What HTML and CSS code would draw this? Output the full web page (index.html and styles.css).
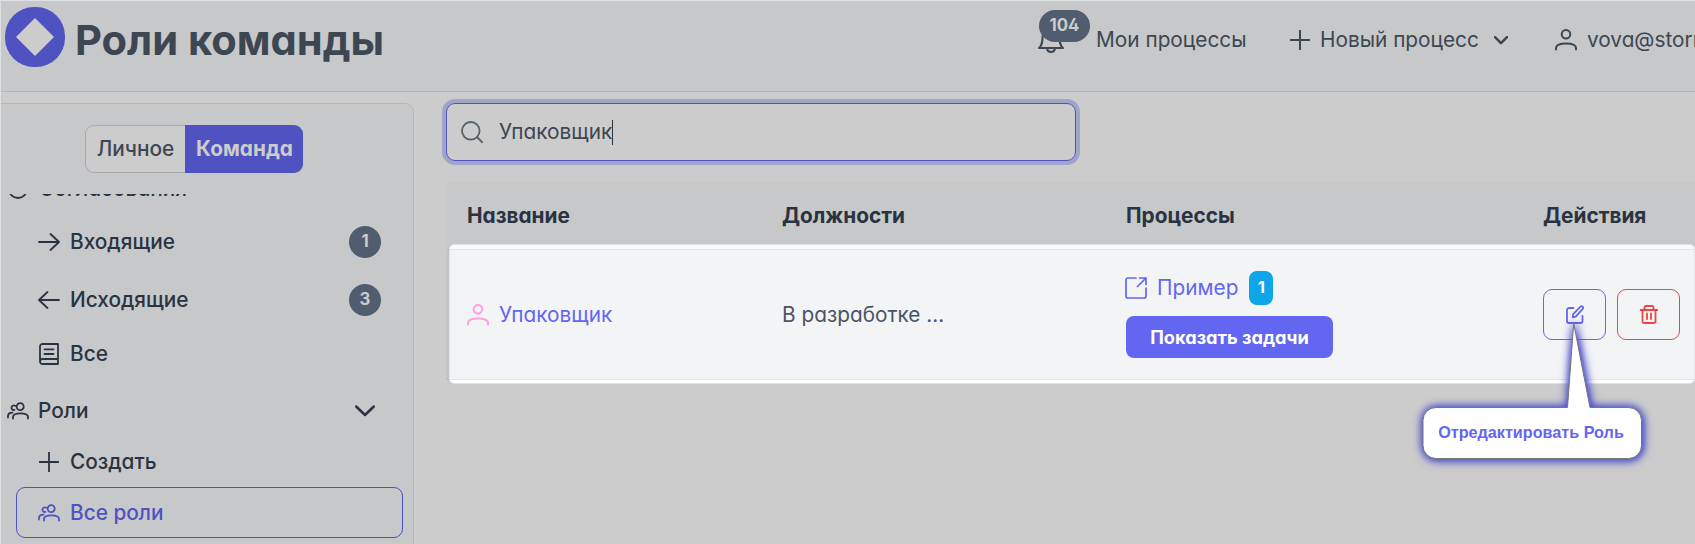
FILE: index.html
```html
<!DOCTYPE html>
<html lang="ru">
<head>
<meta charset="utf-8">
<title>Роли команды</title>
<link rel="stylesheet" href="styles.css">
</head>
<body>
<svg class="sprite" aria-hidden="true">
  <symbol id="user" viewBox="0 0 22 22"><circle cx="11" cy="5.3" r="4.3"/><path d="M1 20.5v-1.4c0-2.9 2.6-4.6 10-4.6s10 1.700 10 4.600v1.400"/></symbol>
  <symbol id="users" viewBox="0 0 22 18"><circle cx="13.200" cy="4.700" r="3.500"/><path d="M6 16.500v-1.500c0-2.500 2-3.700 7.500-3.700s7.500 1.200 7.500 3.700v1.500M8.400 3.800C6.400 2.700 4.300 3.900 4.500 6c.1 1.500 1.500 2.300 2.900 1.900M1 15.500v-1.400c0-2.200 1.200-3.500 4.600-3.500"/></symbol>
  <symbol id="plus" viewBox="0 0 20 20"><path d="M10 .5v19M.5 10h19"/></symbol>
  <symbol id="arrow" viewBox="0 0 22 18"><path d="M1 9h20M12.500 1 21 9l-8.500 8"/></symbol>
</svg>
<div class="app">
  <header class="header">
    <svg class="logo" viewBox="0 0 60 60"><rect width="60" height="60" rx="29"/><path d="M30 11 49 30 30 49 11 30z"/></svg>
    <h1>Роли команды</h1>
    <nav class="topnav">
      <a class="bell">
        <svg class="icon" width="26" height="27" viewBox="0 0 26 27"><path d="M1 21c3-2.500 3.500-5 3.500-11a8.500 8.500 0 0 1 17 0c0 6 .5 8.500 3.500 11zM9 21.500c.6 4.500 7.400 4.500 8 0"/></svg>
        <span class="count bell-count">104</span>
      </a>
      <a class="my">Мои процессы</a>
      <a class="new"><svg class="icon" width="20" height="20"><use href="#plus"/></svg><span>Новый процесс</span>
        <svg class="icon chev-sm" width="14" height="9" viewBox="0 0 14 9"><path d="m1 1.200 6 6 6-6"/></svg></a>
      <a class="account"><svg class="icon" width="22" height="22"><use href="#user"/></svg><span>vova@storm</span></a>
    </nav>
  </header>
  <div class="body">
    <aside class="sidebar">
      <div class="toggle"><span>Личное</span><span class="on">Команда</span></div>
      <ul class="menu">
        <li class="group cut"><svg class="icon" width="20" height="20" viewBox="0 0 20 20"><circle cx="10" cy="10" r="9"/></svg>Согласования</li>
        <li class="in"><svg class="icon" width="22" height="18"><use href="#arrow"/></svg>Входящие<span class="count">1</span></li>
        <li class="out"><svg class="icon flip" width="22" height="18"><use href="#arrow"/></svg>Исходящие<span class="count">3</span></li>
        <li class="all"><svg class="icon" width="22" height="22" viewBox="0 0 22 22"><path d="M20 16V1H4.500A2.500 2.500 0 0 0 2 3.500v15A2.500 2.500 0 0 0 4.500 21H20v-5H4.500A2.500 2.500 0 0 0 2 18.500M6.500 6.300h9M6.500 11h9"/></svg>Все</li>
        <li class="group roles"><svg class="icon" width="22" height="18"><use href="#users"/></svg>Роли<svg class="icon chev" width="20" height="12" viewBox="0 0 20 12"><path d="m1.200 1.500 8.800 8.500 8.800-8.500"/></svg></li>
        <li class="create"><svg class="icon" width="22" height="20" viewBox="0 0 20 20"><use href="#plus"/></svg>Создать</li>
        <li class="active"><svg class="icon" width="22" height="18"><use href="#users"/></svg>Все роли</li>
      </ul>
    </aside>
    <main class="main">
      <div class="search"><svg class="icon" width="22" height="22" viewBox="0 0 22 22"><circle cx="9.800" cy="9.800" r="8.800"/><path d="m16 16 5.300 5.300"/></svg><span>Упаковщик</span><i class="caret"></i></div>
      <section class="table">
        <div class="row head"><span>Название</span><span>Должности</span><span>Процессы</span><span>Действия</span></div>
        <div class="row data">
          <div class="spotlight"></div>
          <a class="name"><svg class="icon pink" width="22" height="22"><use href="#user"/></svg>Упаковщик</a>
          <span class="job">В разработке ...</span>
          <div class="process">
            <a class="example"><svg class="icon" width="22" height="22" viewBox="0 0 22 22"><path d="M11 1H3a2 2 0 0 0-2 2v16a2 2 0 0 0 2 2h16a2 2 0 0 0 2-2v-8M14.500 1H21v6.500M21 1l-8.500 8.500"/></svg>Пример<span class="tag">1</span></a>
            <button class="show">Показать задачи</button>
          </div>
          <div class="actions">
            <button><svg class="icon" width="18" height="19" viewBox="0 0 18 19"><path d="M7.500 3H3a2 2 0 0 0-2 2v11a2 2 0 0 0 2 2h11.500a2 2 0 0 0 2-2v-5M6.700 12.300l.5-3.200 7.200-7.400a1.500 1.500 0 0 1 2.300 2.200L9.700 11.600z"/></svg></button>
            <button class="danger"><svg class="icon" width="18" height="19" viewBox="0 0 18 19"><path d="M.5 5h17M2.500 5v11.500A1.500 1.500 0 0 0 4 18h10a1.500 1.500 0 0 0 1.500-1.500V5M4.500 5V2.500A1.500 1.500 0 0 1 6 1h6a1.500 1.500 0 0 1 1.500 1.500V5M7 8.500V14M11 8.500V14"/></svg></button>
          </div>
        </div>
      </section>
    </main>
  </div>
  <div class="callout">
    <svg width="250" height="170" viewBox="0 0 250 170"><path d="M29 99.500H160.500L166.700 15.500 183 99.500H221.500a13 13 0 0 1 13 13v25a13 13 0 0 1-13 13H29a13 13 0 0 1-13-13v-25a13 13 0 0 1 13-13z"/></svg>
    <span>Отредактировать Роль</span>
  </div>
</div>
</body>
</html>
```

FILE: styles.css
```css
* { box-sizing: border-box; }
body {
  margin: 0;
  font-family: Inter, "Noto Sans", sans-serif;
  font-size: 20.8px;
  line-height: 30px;
  font-feature-settings: "cv02", "cv03", "cv04", "cv11";
  color: #3d4751;
  background: #ccc;
}
.sprite { position: absolute; width: 0; height: 0; }
.app {
  position: relative;
  width: 1695px;
  height: 544px;
  overflow: hidden;
  display: flex;
  flex-direction: column;
  border-top: 1px solid #dfe0e1;
  border-left: 1px solid #dfe0e1;
}
.icon { flex: none; fill: none; stroke: currentColor; stroke-width: 1.8; stroke-linecap: round; stroke-linejoin: round; }
a, span, button { white-space: nowrap; }

.header {
  flex: none;
  height: 91px;
  display: flex;
  align-items: flex-start;
  background: #c7c8ca;
  border-bottom: 1px solid #b4b6b8;
  padding-left: 4px;
}
.logo { flex: none; width: 60px; height: 60px; margin-top: 6px; fill: #4f52c1; }
.logo path { fill: #ccc; }
h1 { flex: none; margin: 13px 0 0 10px; font-size: 41.6px; line-height: 52px; font-weight: 700; width: 310px; white-space: nowrap; }
.topnav { flex: none; margin-left: 653px; padding-top: 24px; display: flex; }
.topnav a { display: flex; align-items: center; height: 30px; flex: none; }
.topnav .icon { margin-right: 11px; stroke-width: 2; }
.topnav .bell { position: relative; width: 58px; }
.topnav .my { width: 194px; }
.topnav .new { width: 265px; }
.topnav .new .icon { margin-right: 10px; }
.topnav .new .chev-sm { margin: 0 0 0 15px; stroke-width: 2.6; }
.topnav .account .icon { margin-right: 10px; }
.count {
  min-width: 32px;
  height: 32px;
  border-radius: 16px;
  background: #505d6f;
  color: #ccc;
  font-size: 16.8px;
  font-weight: 700;
  line-height: 31px;
  text-align: center;
}
.bell-count { position: absolute; left: 1px; top: -15px; width: 51px; }

.body { display: flex; flex: 1; min-height: 0; padding-top: 11px; }
.sidebar {
  flex: none;
  width: 413px;
  background: #c7c8ca;
  border: 1px solid #b6b8bb;
  border-width: 1px 1px 0 0;
  border-top-right-radius: 9px;
  padding-top: 21px;
  overflow: hidden;
}
.toggle { display: flex; width: 218px; height: 48px; margin-left: 84px; font-weight: 500; line-height: 46px; }
.toggle span { width: 100px; text-align: center; background: #ccc; border: 1px solid #a7abb0; border-right: 0; border-radius: 9px 0 0 9px; }
.toggle .on { width: 118px; font-weight: 700; background: #4f52c1; color: #ccc; border-color: #4f52c1; border-radius: 0 9px 9px 0; }
.menu { list-style: none; margin: 21px 0 0; padding: 0 10px 0 15px; color: #2a3341; font-weight: 500; overflow: hidden; }
.menu li { display: flex; align-items: center; padding: 0 22px; height: 50px; }
.menu .icon { margin-right: 10px; }
.menu .count, .menu .chev { margin-left: auto; margin-right: 0; }
.menu .group { margin-left: -15px; padding-left: 6px; }
.menu .cut { height: 30px; margin-top: -20px; }
.menu .cut .icon { margin: 0 11px 0 1px; }
.menu .in { height: 58px; margin-top: 9px; }
.menu .out { height: 58px; }
.menu .roles { height: 63px; }
.menu .roles .icon { margin-right: 9px; }
.menu .create { height: 39px; margin-bottom: 6px; }
.menu .roles .chev { margin-right: 6px; stroke-width: 2.5; }
.flip { transform: scaleX(-1); }
.menu .active { height: 51px; border: 1px solid #4f52c1; border-radius: 9px; color: #4f52c1; padding-left: 21px; }

.main { flex: 1; min-width: 0; padding-left: 32px; }
.search {
  width: 630px;
  height: 58px;
  display: flex;
  align-items: center;
  padding-left: 14px;
  border: 1px solid #4f52c1;
  border-radius: 9px;
  box-shadow: 0 0 0 4px #9fa5c9;
}
.search .icon { margin-right: 16px; color: #565f6a; }
.caret { width: 1px; height: 25px; background: #2a3341; }
.table { margin-top: 21px; }
.row { display: grid; grid-template-columns: 315px 344px 417px 1fr; align-items: center; padding-left: 21px; }
.head { height: 68px; background: #c7c8ca; border-bottom: 1px solid #b6b8bb; color: #2a3341; font-weight: 700; }
.data { position: relative; height: 130px; background: #c3c4c6; border-bottom: 1px solid #b6b8bb; }
.data > * { position: relative; }
.data .spotlight {
  position: absolute;
  left: 3px;
  right: 0;
  top: -6px;
  height: 140px;
  border-radius: 5px;
  border: 1px solid #e2e3e5;
  background: linear-gradient(#f9fafb 4px, #e2e4e7 4px 5px, #f3f4f6 5px 134px, #e2e4e7 134px 135px, #fff 135px);
}
.name, .example { display: flex; align-items: center; color: #6366f1; }
.name .icon { margin-right: 10px; color: #ffa0e0; stroke-width: 2.1; }
.job { color: #4b5563; }
.example { height: 34px; margin-left: -1px; }
.example .icon { margin-right: 10px; stroke-width: 1.7; }
.tag { margin-left: 11px; width: 24px; height: 34px; border-radius: 8px; background: #0ea5e9; color: #fff; font-size: 16px; line-height: 33px; font-weight: 700; text-align: center; }
button { font: inherit; font-feature-settings: inherit; cursor: pointer; }
.show { display: block; width: 207px; height: 42px; margin-top: 11px; padding: 0; border: 0; border-radius: 8px; background: #6366f1; color: #fff; font-size: 18.2px; font-weight: 700; }
.actions { display: flex; gap: 11px; }
.actions button { width: 63px; height: 51px; padding: 0; display: grid; place-items: center; background: none; border: 1px solid; border-radius: 9px; color: #6366f1; }
.actions .danger { color: #ef4444; }

.callout { position: absolute; left: 1406px; top: 307px; width: 250px; height: 170px; }
.callout svg { display: block; overflow: visible; fill: #fff; stroke: #777; filter: drop-shadow(0 0 4px #4f52c1) drop-shadow(1px 1px 3px #5558cf); }
.callout span { position: absolute; left: 15px; top: 99px; width: 218px; text-align: center; font: bold 16.2px/50px "Liberation Sans", Arial, sans-serif; color: #6366f1; }
```
